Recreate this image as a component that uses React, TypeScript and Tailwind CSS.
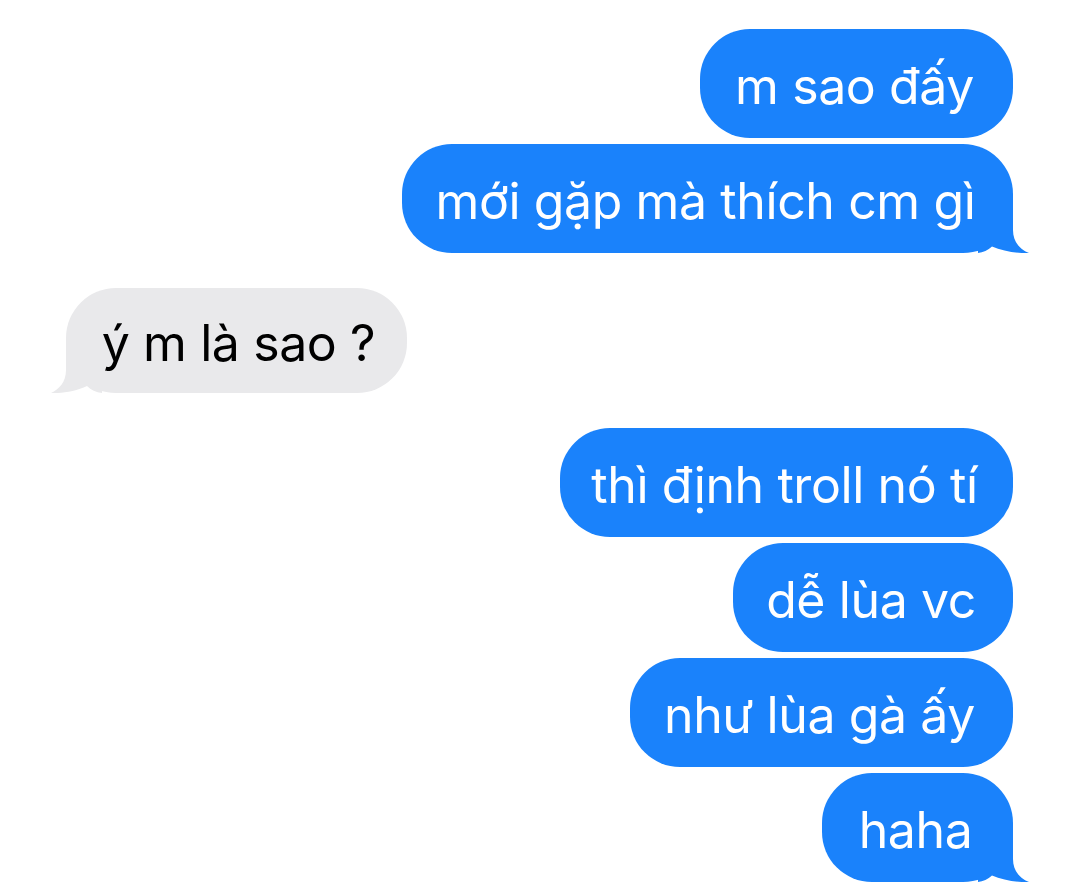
import React from "react";

const BLUE = "#1a82fb";

function SentTail() {
  return (
    <svg
      className="absolute bottom-0 right-[-16px]"
      width="51"
      height="50"
      viewBox="0 0 51 50"
    >
      <path
        d="M35 0 L35 27 C35 39 42 46.5 51 50 C41 50.6 25 48.5 14 43.5 C10 47 5 49.6 0 50 L0 0 Z"
        fill={BLUE}
      />
    </svg>
  );
}

function RecvTail() {
  return (
    <svg
      className="absolute bottom-0 left-[-15px]"
      width="51"
      height="50"
      viewBox="0 0 51 50"
    >
      <path
        d="M15 0 L15 27 C15 39 8 46.5 0 50 C9 50.6 25 48.5 36 43 C40 47 45 49.6 51 50 L51 0 Z"
        fill="#e9e9eb"
      />
    </svg>
  );
}

function Sent({ text, w, tail }: { text: string; w: string; tail?: boolean }) {
  return (
    <div className="flex justify-end pr-[59px]">
      <div
        className={`relative h-[109px] ${w} rounded-[50px] bg-[#1a82fb] flex items-center justify-center pr-[4px] text-white`}
      >
        {tail && <SentTail />}
        <span className="relative whitespace-nowrap pt-[5px]">{text}</span>
      </div>
    </div>
  );
}

export default function App() {
  return (
    <div
      className="w-[1072px] h-[888px] bg-white overflow-hidden pt-[29px] text-[50px] leading-none tracking-[-0.4px]"
      style={{ fontFamily: "Inter, 'Noto Sans', sans-serif" }}
    >
      <div className="flex flex-col gap-[6px]">
        <Sent text="m sao đấy" w="w-[313px]" />
        <Sent text="mới gặp mà thích cm gì" w="w-[611px]" tail />
      </div>
      <div className="flex pl-[66px] mt-[35px]">
        <div className="relative h-[105px] w-[341px] rounded-[50px] bg-[#e9e9eb] flex items-center justify-center pl-[4px] text-black">
          <RecvTail />
          <span className="relative whitespace-nowrap pt-[5px]">ý m là sao ?</span>
        </div>
      </div>
      <div className="flex flex-col gap-[6px] mt-[35px]">
        <Sent text="thì định troll nó tí" w="w-[453px]" />
        <Sent text="dễ lùa vc" w="w-[280px]" />
        <Sent text="như lùa gà ấy" w="w-[383px]" />
        <Sent text="haha" w="w-[191px]" tail />
      </div>
    </div>
  );
}
